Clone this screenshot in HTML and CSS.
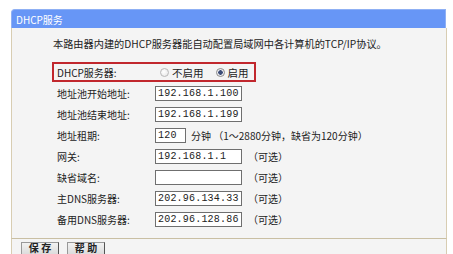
FILE: index.html
```html
<!DOCTYPE html>
<html lang="zh-CN">
<head>
<meta charset="utf-8">
<title>DHCP服务</title>
<link rel="stylesheet" href="styles.css">
</head>
<body>
<div class="panel">
  <div class="title">DHCP服务</div>
  <div class="body">
    <p class="intro">本路由器内建的DHCP服务器能自动配置局域网中各计算机的TCP/IP协议。</p>
    <div class="form">
      <div class="row highlight">
        <span class="label">DHCP服务器:</span>
        <span class="radios">
          <span class="radio"></span><span class="rtext">不启用</span>
          <span class="radio on"></span><span class="rtext">启用</span>
        </span>
      </div>
      <div class="row"><span class="label">地址池开始地址:</span><span class="input">192.168.1.100</span></div>
      <div class="row"><span class="label">地址池结束地址:</span><span class="input">192.168.1.199</span></div>
      <div class="row"><span class="label">地址租期:</span><span class="input short">120</span><span class="note">分钟 （1～2880分钟，缺省为120分钟）</span></div>
      <div class="row"><span class="label">网关:</span><span class="input">192.168.1.1</span><span class="opt">（可选）</span></div>
      <div class="row"><span class="label">缺省域名:</span><span class="input"></span><span class="opt">（可选）</span></div>
      <div class="row"><span class="label">主DNS服务器:</span><span class="input">202.96.134.33</span><span class="opt">（可选）</span></div>
      <div class="row"><span class="label">备用DNS服务器:</span><span class="input">202.96.128.86</span><span class="opt">（可选）</span></div>
    </div>
  </div>
  <div class="actions">
    <span class="btn">保 存</span>
    <span class="btn">帮 助</span>
  </div>
</div>
</body>
</html>
```
FILE: styles.css
```css
* { box-sizing: border-box; }
html, body { margin: 0; background: #ffffff; }
body {
  padding: 9px 6px 0 11px;
  font-family: "Noto Sans CJK SC", "Liberation Sans", sans-serif;
  font-size: 10px;
  color: #222;
}
.panel { width: 436px; }
.title {
  height: 19px;
  background: #6796f6;
  color: #ffffff;
  font-size: 10px;
  line-height: 19px;
  padding-left: 4px;
  border-top-left-radius: 4px;
  border: 1px solid #8fb0f4;
  border-bottom: none;
  margin-right: 1px;
}
.body {
  background: #f4f4f4;
  border-left: 1px solid #d8cdb2;
  border-right: 1px solid #d8cdb2;
  border-bottom: 1px solid #c9bfa3;
  padding: 8px 0 10px 0;
  height: 211px;
}
.intro {
  margin: 0 0 10px 41px;
  line-height: 16px;
  font-size: 10.2px;
}
.form { margin-left: 40px; }
.row {
  display: flex;
  align-items: center;
  height: 21px;
  padding-left: 5px;
}
.row.highlight {
  width: 204px;
  height: 20px;
  margin-bottom: 1px;
  border: 2px solid #c1272d;
  padding-left: 3px;
}
.label { width: 98px; flex: none; }
.radios { display: flex; align-items: center; }
.radio {
  width: 9px;
  height: 9px;
  border-radius: 50%;
  border: 1px solid #b8b8b8;
  background: radial-gradient(circle at 40% 40%, #ffffff, #e3e3e3);
  margin-left: 5px;
  margin-right: 3px;
}
.radio.on {
  margin-left: 12px;
  border-color: #8a8a8a;
  background: radial-gradient(circle, #3d4e78 0, #3d4e78 2px, #e8e8ee 2.5px, #ffffff 4.5px);
}
.rtext { font-size: 10.5px; }
.input {
  width: 87px;
  height: 15px;
  background: #ffffff;
  border: 1px solid #6f6f6f;
  font-family: "Liberation Mono", "DejaVu Sans Mono", monospace;
  font-size: 10px;
  letter-spacing: 0.2px;
  line-height: 13px;
  padding-left: 2px;
  color: #222;
  white-space: nowrap;
  overflow: hidden;
}
.input.short { width: 31px; }
.note { margin-left: 5px; }
.opt { margin-left: 6px; }
.actions {
  background: #f4f4f4;
  border-left: 1px solid #d8cdb2;
  border-right: 1px solid #d8cdb2;
  padding: 3px 0 0 9px;
  height: 15px;
  display: flex;
  gap: 8px;
  align-items: flex-start;
}
.btn {
  flex: none;
  display: inline-block;
  width: 38px;
  height: 12px;
  border: 1px solid #555;
  border-top-color: #999;
  border-left-color: #999;
  border-bottom: none;
  background: linear-gradient(#f2f2f2, #dcdcdc);
  text-align: center;
  font-size: 10px;
  font-weight: bold;
  line-height: 10px;
  color: #222;
  padding-top: 0;
}
```
